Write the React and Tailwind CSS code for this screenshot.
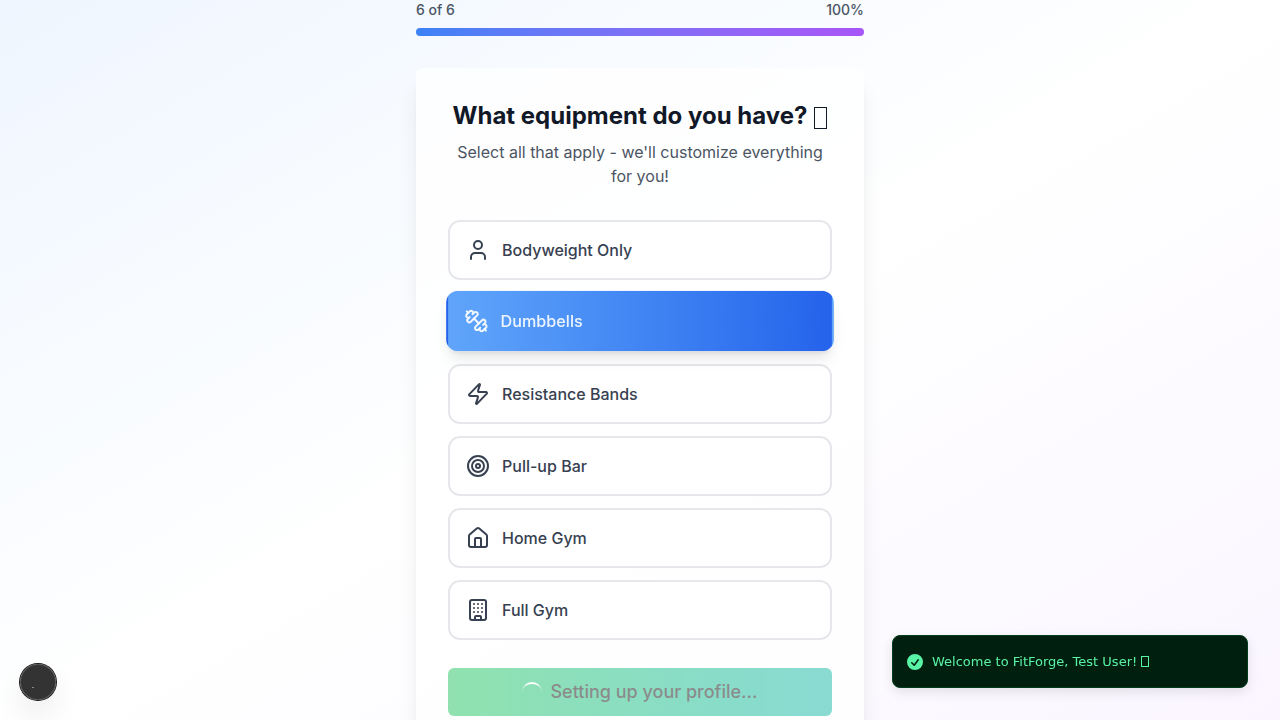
import { User, Zap, Target, House, Building } from 'lucide-react';

function DumbbellIcon({ className }) {
  return (
    <svg
      viewBox="0 0 24 24"
      fill="none"
      stroke="currentColor"
      strokeWidth="2"
      strokeLinecap="round"
      strokeLinejoin="round"
      className={className}
      aria-hidden="true"
    >
      <path d="M14.4 14.4 9.6 9.6" />
      <path d="M18.657 21.485a2 2 0 1 1-2.829-2.828l-1.767 1.768a2 2 0 1 1-2.829-2.829l6.364-6.364a2 2 0 1 1 2.829 2.829l-1.768 1.767a2 2 0 1 1 2.828 2.829z" />
      <path d="m21.5 21.5-1.4-1.4" />
      <path d="M3.9 3.9 2.5 2.5" />
      <path d="M6.404 12.768a2 2 0 1 1-2.829-2.829l1.768-1.767a2 2 0 1 1-2.828-2.829l2.828-2.828a2 2 0 1 1 2.829 2.828l1.767-1.768a2 2 0 1 1 2.829 2.829z" />
    </svg>
  );
}

const options = [
  { label: 'Bodyweight Only', Icon: User },
  { label: 'Dumbbells', Icon: DumbbellIcon, selected: true },
  { label: 'Resistance Bands', Icon: Zap },
  { label: 'Pull-up Bar', Icon: Target },
  { label: 'Home Gym', Icon: House },
  { label: 'Full Gym', Icon: Building },
];

const optionBase =
  'flex w-full items-center gap-3 rounded-xl border-2 p-4 text-left text-base font-medium';
const optionIdle = 'border-[#e5e7eb] bg-white text-[#374151]';
const optionSelected =
  'border-transparent bg-linear-to-r from-[#60a5fa] to-[#2563eb] text-white/90 shadow-lg scale-[1.01] -translate-y-px will-change-transform';

function Option({ label, Icon, selected }) {
  return (
    <button
      type="button"
      aria-pressed={Boolean(selected)}
      className={`${optionBase} ${selected ? optionSelected : optionIdle}`}
    >
      <Icon className="size-6" aria-hidden="true" />
      <span>{label}</span>
    </button>
  );
}

function Toast() {
  return (
    <div
      role="status"
      className="fixed right-8 bottom-8 flex min-h-[53px] w-[356px] items-center gap-[7px] rounded-lg border border-[#003d1c] bg-[#001f0f] px-3 py-2 font-['DejaVu_Sans',sans-serif] text-[13px] leading-5 font-medium text-[#59f3a6] shadow-[0_4px_12px_rgba(0,0,0,0.1)]"
    >
      <svg viewBox="0 0 20 20" fill="currentColor" className="size-5" aria-hidden="true">
        <path
          fillRule="evenodd"
          clipRule="evenodd"
          d="M10 18a8 8 0 100-16 8 8 0 000 16zm3.857-9.809a.75.75 0 00-1.214-.882l-3.483 4.79-1.88-1.88a.75.75 0 10-1.06 1.061l2.5 2.5a.75.75 0 001.137-.089l4-5.5z"
        />
      </svg>
      <span className="flex items-center gap-1">
        Welcome to FitForge, Test User!
        <span className="h-[11px] w-2 border border-current" />
      </span>
    </div>
  );
}

export default function App() {
  return (
    <div className="flex min-h-screen justify-center bg-linear-to-br from-[#eff6ff] via-white to-[#faf5ff] font-[Inter,sans-serif]">
      <main className="w-full max-w-md">
        <div className="mb-8">
          <div className="mb-2 flex justify-between text-sm font-medium text-[#4b5563]">
            <span>6 of 6</span>
            <span>100%</span>
          </div>
          <div
            role="progressbar"
            aria-label="Progress"
            aria-valuenow={100}
            className="h-2 rounded-full bg-linear-to-r from-[#3b82f6] to-[#a855f7]"
          />
        </div>

        <section className="rounded-lg bg-white/80 p-8 shadow-xl">
          <div className="mb-8 text-center">
            <h1 className="mb-2 flex items-center justify-center gap-[7px] text-2xl font-bold text-[#111827]">
              What equipment do you have?
              <span className="mt-1 h-[22px] w-[13px] border border-current" />
            </h1>
            <p className="text-base text-[#4b5563]">
              Select all that apply - we'll customize everything for you!
            </p>
          </div>

          <div className="flex flex-col gap-3">
            {options.map((option) => (
              <Option key={option.label} {...option} />
            ))}
          </div>

          <button
            type="button"
            disabled
            className="mt-7 flex h-12 w-full items-center justify-center gap-2 rounded-md bg-linear-to-r from-[#22c55e] to-[#14b8a6] text-lg font-medium text-[#191919] opacity-50"
          >
            <span className="size-5 rounded-full border-t-2 border-white" />
            Setting up your profile...
          </button>
        </section>
      </main>

      <button
        type="button"
        aria-label="Developer tools"
        className="fixed bottom-5 left-5 flex size-9 items-center justify-center rounded-full bg-black/80 shadow-[0_0_0_1px_#171717,inset_0_0_0_1px_rgba(255,255,255,0.14),0_16px_32px_-8px_rgba(0,0,0,0.24)]"
      >
        <svg viewBox="0 0 36 36" className="size-9" aria-hidden="true">
          <path d="M12 23.5h2" stroke="#888" strokeWidth="1" />
        </svg>
      </button>

      <Toast />
    </div>
  );
}
